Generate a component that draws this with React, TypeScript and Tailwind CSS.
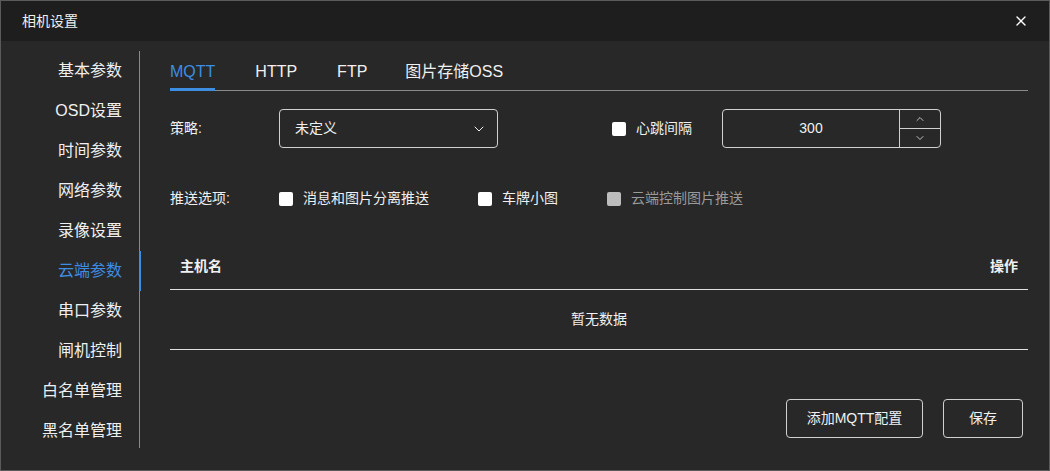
import { ChevronDown, ChevronUp, X } from "lucide-react";

const menu = [
  "基本参数",
  "OSD设置",
  "时间参数",
  "网络参数",
  "录像设置",
  "云端参数",
  "串口参数",
  "闸机控制",
  "白名单管理",
  "黑名单管理",
];

const tabs = [
  { name: "MQTT", mr: "mr-[40px]" },
  { name: "HTTP", mr: "mr-[40px]" },
  { name: "FTP", mr: "mr-[38px]" },
  { name: "图片存储OSS", mr: "" },
];

function Check({ label, disabled }: { label: string; disabled?: boolean }) {
  return (
    <label className="flex items-center gap-[10px]">
      <span
        className={
          disabled
            ? "w-[14px] h-[14px] rounded-[2px] bg-[#bdbdbd]"
            : "w-[14px] h-[14px] rounded-[2px] bg-white"
        }
      />
      <span className={disabled ? "text-[#9a9a9a]" : "text-[#f0f0f0]"}>{label}</span>
    </label>
  );
}

export default function App() {
  return (
    <div
      className="w-[1050px] h-[471px] bg-[#282828] border border-[#5a5a5a] text-[#f0f0f0] flex flex-col overflow-hidden"
      style={{ fontFamily: '"Liberation Sans", "Noto Sans CJK SC", sans-serif' }}
    >
      {/* Header */}
      <div className="h-[40px] bg-[#1e1e1e] flex items-center justify-between pl-[21px] pr-[20px] shrink-0">
        <span className="text-[14px]">相机设置</span>
        <X size={16} strokeWidth={2} className="text-white" />
      </div>

      <div className="flex flex-1 pt-[10px]">
        {/* Sidebar */}
        <div className="w-[140px] shrink-0">
          <div className="relative h-[397px] w-[139px]">
            <span className="absolute right-0 top-0 h-[397px] w-px bg-[#8a8a8a]" />
            {menu.map((m) => (
              <div
                key={m}
                className={
                  m === "云端参数"
                    ? "h-[40px] flex items-center justify-end pr-[18px] text-[16px] text-[#3d8ee0] relative"
                    : "h-[40px] flex items-center justify-end pr-[18px] text-[16px]"
                }
              >
                {m}
                {m === "云端参数" && (
                  <span className="absolute right-[-1px] top-0 h-full w-[2px] bg-[#3d8ee0]" />
                )}
              </div>
            ))}
          </div>
        </div>

        {/* Content */}
        <div className="flex-1 pl-[29px] pr-[21px] flex flex-col">
          {/* Tabs */}
          <div className="flex border-b border-[#8a8a8a] h-[40px] shrink-0">
            {tabs.map((t, i) => (
              <div
                key={t.name}
                className={
                  i === 0
                    ? "relative text-[16px] text-[#3d8ee0] pt-[9px] " + t.mr
                    : "relative text-[16px] pt-[9px] " + t.mr
                }
              >
                {t.name}
                {i === 0 && (
                  <span className="absolute left-0 right-0 bottom-[-1px] h-[3px] bg-[#3d8ee0]" />
                )}
              </div>
            ))}
          </div>

          {/* Strategy row */}
          <div className="flex items-center mt-[18px] h-[39px] text-[14px]">
            <span className="w-[109px]">策略:</span>
            <div className="w-[219px] h-[39px] border border-[#d0d0d0] rounded-[4px] flex items-center justify-between pl-[15px] pr-[10px]">
              <span>未定义</span>
              <ChevronDown size={16} strokeWidth={1.5} />
            </div>
            <div className="ml-[114px]">
              <Check label="心跳间隔" />
            </div>
            <div className="ml-[30px] w-[219px] h-[39px] border border-[#d0d0d0] rounded-[4px] flex">
              <div className="flex-1 flex items-center justify-center">300</div>
              <div className="w-[41px] border-l border-[#d0d0d0] flex flex-col">
                <div className="flex-1 flex items-center justify-center border-b border-[#d0d0d0]">
                  <ChevronUp size={12} strokeWidth={1.5} />
                </div>
                <div className="flex-1 flex items-center justify-center">
                  <ChevronDown size={12} strokeWidth={1.5} />
                </div>
              </div>
            </div>
          </div>

          {/* Push options */}
          <div className="flex items-center mt-[40px] text-[14px]">
            <span className="w-[109px]">推送选项:</span>
            <div className="w-[199px]">
              <Check label="消息和图片分离推送" />
            </div>
            <div className="w-[129px]">
              <Check label="车牌小图" />
            </div>
            <Check label="云端控制图片推送" disabled />
          </div>

          {/* Table */}
          <div className="mt-[35px] text-[14px]">
            <div className="h-[46px] flex items-center justify-between px-[10px] border-b border-[#e0e0e0] font-bold">
              <span>主机名</span>
              <span>操作</span>
            </div>
            <div className="h-[60px] flex items-center justify-center border-b border-[#e0e0e0]">
              暂无数据
            </div>
          </div>

          {/* Buttons */}
          <div className="flex justify-end gap-[20px] mt-[49px] pr-[5px] text-[14px]">
            <button className="w-[137px] h-[39px] border border-[#d0d0d0] rounded-[4px]">
              添加MQTT配置
            </button>
            <button className="w-[80px] h-[39px] border border-[#d0d0d0] rounded-[4px]">
              保存
            </button>
          </div>
        </div>
      </div>
    </div>
  );
}
